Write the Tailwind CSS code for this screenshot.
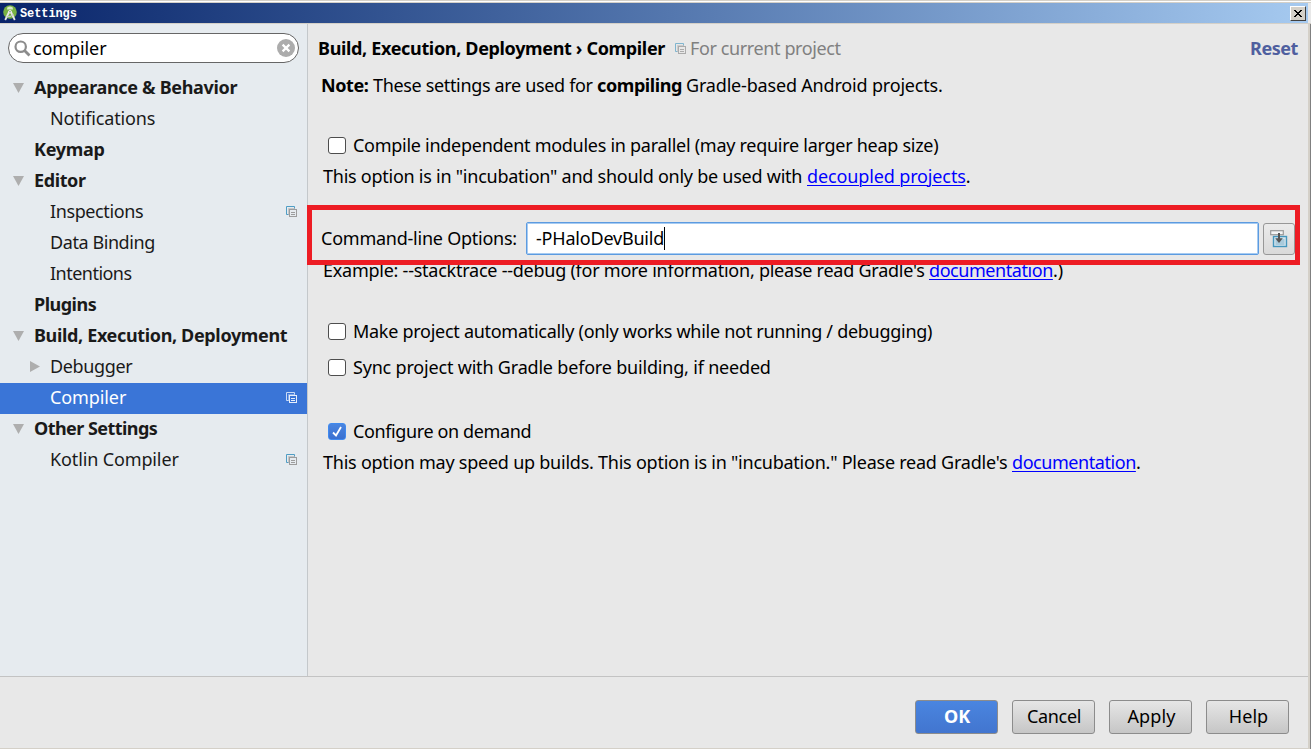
<!DOCTYPE html>
<html lang="en">
<head>
<meta charset="utf-8">
<title>Settings</title>
<script src="https://cdn.jsdelivr.net/npm/@tailwindcss/browser@4"></script>
</head>
<body class="w-[1311px] h-[749px] overflow-hidden flex flex-col bg-[#e8e8e8] border-t border-t-[#d4d0c8] font-['Noto_Sans',sans-serif] text-[18px] leading-5 text-black whitespace-nowrap">
<svg class="hidden">
  <symbol id="copy" viewBox="0 0 11 11"><path d="M2.5 8.5H.5v-8h8v2" fill="none" stroke="var(--a)"/><rect x="3.5" y="3.5" width="7" height="7" fill="none" stroke="var(--b)"/><path d="M5 6.5h4M5 8.5h4" stroke="var(--b)"/><path d="M2.5 9V2.5H9" fill="none" stroke="var(--b)" opacity=".45"/></symbol>
</svg>
<header class="h-[23px] shrink-0 flex flex-col">
  <div class="h-px bg-white"></div>
  <div class="h-px bg-[#d4d0c8]"></div>
  <div class="h-5 mr-[3px] pl-[3px] pr-[2px] flex items-center bg-linear-to-r from-[#0a246a] to-[#a6caf0]">
    <svg width="14" height="16" viewBox="0 0 14 16"><circle cx="7" cy="7" r="6.8" fill="#78b143"/><path d="M4 4.6a3 3 0 0 1 6 0z" fill="#d9e8c9"/><path d="M4.7 2.3l.8 1.2M9.3 2.3l-.8 1.2" stroke="#d9e8c9" stroke-width=".6"/><path d="M6.3 6.5L2.2 15M7.7 6.5L11.8 15" stroke="#e6e6e6" stroke-width="1.8"/><path d="M3.6 11.2q3.4 1.6 6.8-2" stroke="#c3c9c5" stroke-width="1.2" fill="none"/><circle cx="7" cy="6.8" r="1.7" fill="#f2f2f2"/><circle cx="7" cy="6.8" r=".7" fill="#5d7560"/></svg>
    <span class="ml-[3px] mt-[2px] font-['Liberation_Mono',monospace] font-bold text-[12px] leading-4 tracking-[-0.1px] text-white">Settings</span>
    <span class="ml-auto w-4 h-[15px] grid place-items-center bg-[#d4d0c8] border border-t-white border-l-white border-r-[#404040] border-b-[#404040]"><svg width="8" height="7" viewBox="0 0 8 7" shape-rendering="crispEdges"><path d="M0 0h2v1h1v1h2V1h1V0h2v1H7v1H6v1H5v1h1v1h1v1h1v1H6V6H5V5H3v1H2v1H0V6h1V5h1V4h1V3H2V2H1V1H0z"/></svg></span>
  </div>
  <div class="h-px bg-[#d4d0c8]"></div>
</header>
<main class="flex h-[652px] shrink-0">
  <aside class="w-[308px] shrink-0 border-r border-[#c4c8cb] bg-[#e6ebef] text-[#1a1a1a]">
    <div class="mt-[9px] ml-2 w-[291px] h-[30px] rounded-full border border-[#666] bg-white flex items-center pl-[5px] pr-[3px] text-black">
      <svg width="17" height="17" viewBox="0 0 17 17" fill="none" stroke="#8c8c8c"><circle cx="6.7" cy="6.7" r="5.2" stroke-width="2.2"/><path d="M10.5 10.5l5 5" stroke-width="2.8"/></svg>
      <span class="ml-[2px] tracking-[-.1px]">compiler</span>
      <svg class="ml-auto" width="18" height="18" viewBox="0 0 18 18"><circle cx="9" cy="9" r="9" fill="#acacac"/><path d="M5.6 5.6l6.8 6.8M12.4 5.6l-6.8 6.8" stroke="#fff" stroke-width="2.2"/></svg>
    </div>
    <nav class="mt-[10px] [&>div]:h-[31px] [&>div]:flex [&>div]:items-center [&>div]:pb-[4px] [&>div]:pr-[10px] [&_svg]:shrink-0 [&_svg]:mt-[2px]">
      <div class="pl-[13px] font-bold"><svg class="mr-[10px]" width="11" height="10" fill="#aeaeae"><path d="M0 0h11L5.5 10z"/></svg><span class="tracking-[-.32px]">Appearance &amp; Behavior</span></div>
      <div class="pl-[50px]"><span class="tracking-[-.14px]">Notifications</span></div>
      <div class="pl-[34px] font-bold"><span class="tracking-[-.3px]">Keymap</span></div>
      <div class="pl-[13px] font-bold"><svg class="mr-[10px]" width="11" height="10" fill="#aeaeae"><path d="M0 0h11L5.5 10z"/></svg><span class="tracking-[-.4px]">Editor</span></div>
      <div class="pl-[50px]"><span class="tracking-[-.39px]">Inspections</span><svg class="ml-auto [--a:#4f9dc4] [--b:#9c9c9c]" width="11" height="11"><use href="#copy"/></svg></div>
      <div class="pl-[50px]"><span class="tracking-[-.42px]">Data Binding</span></div>
      <div class="pl-[50px]"><span class="tracking-[-.52px]">Intentions</span></div>
      <div class="pl-[34px] font-bold"><span class="tracking-[-.5px]">Plugins</span></div>
      <div class="pl-[13px] font-bold"><svg class="mr-[10px]" width="11" height="10" fill="#aeaeae"><path d="M0 0h11L5.5 10z"/></svg><span class="tracking-[-.35px]">Build, Execution, Deployment</span></div>
      <div class="pl-[30px]"><svg class="mr-[10px]" width="10" height="11" fill="#aeaeae"><path d="M0 0v11l10-5.5z"/></svg><span class="tracking-[-.35px]">Debugger</span></div>
      <div class="pl-[50px] bg-[#3a75d7] text-white"><span class="tracking-[-.1px]">Compiler</span><svg class="ml-auto [--a:#c9daf5] [--b:#e6eefb]" width="11" height="11"><use href="#copy"/></svg></div>
      <div class="pl-[13px] font-bold"><svg class="mr-[10px]" width="11" height="10" fill="#aeaeae"><path d="M0 0h11L5.5 10z"/></svg><span class="tracking-[-.55px]">Other Settings</span></div>
      <div class="pl-[50px]"><span class="tracking-[-.13px]">Kotlin Compiler</span><svg class="ml-auto [--a:#4f9dc4] [--b:#9c9c9c]" width="11" height="11"><use href="#copy"/></svg></div>
    </nav>
  </aside>
  <section class="w-[1000px] shrink-0 pt-[14px] flex flex-col">
    <div class="h-5 pl-[10px] pr-[10px] flex">
      <h1 class="font-bold w-[357px]"><span class="tracking-[-.34px]">Build, Execution, Deployment › Compiler</span></h1>
      <svg class="mt-[5px] mr-1 [--a:#7fb5cf] [--b:#ababab]" width="11" height="11"><use href="#copy"/></svg>
      <span class="text-[#808080] tracking-[-.39px]">For current project</span>
      <span class="ml-auto font-bold text-[#4f5f9f] tracking-[-.44px]">Reset</span>
    </div>
    <p class="mt-[17px] h-5 pl-[13px] flex"><b class="w-[52px] tracking-[-.4px]">Note:</b><span class="w-[224px] tracking-[-.34px]">These settings are used for</span><b class="w-[89px] tracking-[-.4px]">compiling</b><span class="tracking-[-.18px]">Gradle-based Android projects.</span></p>
    <label class="mt-[40px] h-5 pl-5 flex"><span class="mt-[2px] mr-[7px] w-[18px] h-[17px] rounded-[3px] border border-[#4d4d4d] bg-white"></span><span class="tracking-[-.275px]">Compile independent modules in parallel (may require larger heap size)</span></label>
    <p class="mt-[11px] h-5 pl-[15px] flex"><span class="w-[484px] tracking-[-.25px]">This option is in "incubation" and should only be used with</span><a class="text-[#00f] underline decoration-1 underline-offset-2 tracking-[-.13px]">decoupled projects</a>.</p>
    <div class="relative z-10 mt-[19px] -ml-px w-[993px] h-[60px] shrink-0 border-5 border-[#ed1c24] flex pl-[9px] pt-[12px]">
      <span class="w-[205px] pt-[6px] tracking-[-.24px]">Command-line Options:</span>
      <div class="w-[733px] h-[33px] shrink-0 rounded-[2px] border border-[#5c9be0] ring-1 ring-inset ring-[#a6cbf2] bg-white flex items-center pl-[9px]"><span class="-mt-[2px] tracking-[-.2px]">-PHaloDevBuild</span><span class="w-px h-[23px] bg-black"></span></div>
      <button class="ml-1 -mr-px w-[32px] h-[32px] shrink-0 mt-px rounded-[3px] border border-[#979797] bg-linear-to-b from-[#ebebeb] to-[#d9d9d9] grid place-items-center"><svg width="18" height="18" viewBox="0 0 18 18"><rect x="3.5" y="6.5" width="13" height="10" fill="#d2e4ed" stroke="#4596bd" stroke-width="1.4"/><rect x="5.5" y="9" width="9" height="6" fill="#a9cadb"/><rect x=".7" y=".7" width="12.6" height="4" fill="#f4f4f4" stroke="#999" stroke-width="1.2"/><path d="M9 3v7" stroke="#555" stroke-width="2"/><path d="M5.2 8.2h7.6L9 13z" fill="#555"/></svg></button>
    </div>
    <p class="-mt-[5px] h-5 pl-[15px] flex"><span class="w-[606px] tracking-[-.245px]">Example: --stacktrace --debug (for more information, please read Gradle's</span><a class="text-[#00f] underline decoration-1 underline-offset-2 tracking-[-.44px]">documentation</a>.)</p>
    <label class="mt-[41px] h-5 pl-5 flex"><span class="mt-[2px] mr-[7px] w-[18px] h-[17px] rounded-[3px] border border-[#4d4d4d] bg-white"></span><span class="tracking-[-.28px]">Make project automatically (only works while not running / debugging)</span></label>
    <label class="mt-[16px] h-5 pl-5 flex"><span class="mt-[2px] mr-[7px] w-[18px] h-[17px] rounded-[3px] border border-[#4d4d4d] bg-white"></span><span class="tracking-[-.19px]">Sync project with Gradle before building, if needed</span></label>
    <label class="mt-[44px] h-5 pl-5 flex"><span class="mt-[2px] mr-[7px] w-[18px] h-[17px] rounded-[3px] border border-[#3f8af0] bg-linear-to-b from-[#4a85e0] to-[#3a70d0] grid place-items-center"><svg width="10" height="11" viewBox="0 0 10 11" fill="none" stroke="#fff" stroke-width="1.8"><path d="M1 6.5l3 3L9 1"/></svg></span><span class="tracking-[-.38px]">Configure on demand</span></label>
    <p class="mt-[11px] h-5 pl-[15px] flex"><span class="w-[689px] tracking-[-.24px]">This option may speed up builds. This option is in "incubation." Please read Gradle's</span><a class="text-[#00f] underline decoration-1 underline-offset-2 tracking-[-.44px]">documentation</a>.</p>
  </section>
  <div class="w-[2px] bg-[#d4d0c8]"></div><div class="w-px bg-[#808080]"></div>
</main>
<footer class="flex-1 flex">
  <div class="w-[1308px] border-t border-[#c3c3c3] border-b border-b-[#d4d0c8] pt-[23px] pr-[19px] flex justify-end gap-[14px] text-center [&>button]:w-[83px] [&>button]:h-[34px] [&>button]:pb-[2px] [&>button]:rounded-[3px] [&>button]:border [&>button]:border-[#8c8c8c] [&>button]:bg-linear-to-b">
    <button class="from-[#4a85e0] to-[#4275cf] text-white font-bold pl-px">OK</button>
    <button class="from-[#e6e6e6] to-[#c6c6c6] tracking-[-.3px] pl-px">Cancel</button>
    <button class="from-[#e6e6e6] to-[#c6c6c6] tracking-[.1px] pl-[2px]">Apply</button>
    <button class="from-[#e6e6e6] to-[#c6c6c6] tracking-[.1px] pl-[2px]">Help</button>
  </div>
  <div class="w-[2px] bg-[#d4d0c8]"></div><div class="w-px bg-[#808080]"></div>
</footer>
</body>
</html>
